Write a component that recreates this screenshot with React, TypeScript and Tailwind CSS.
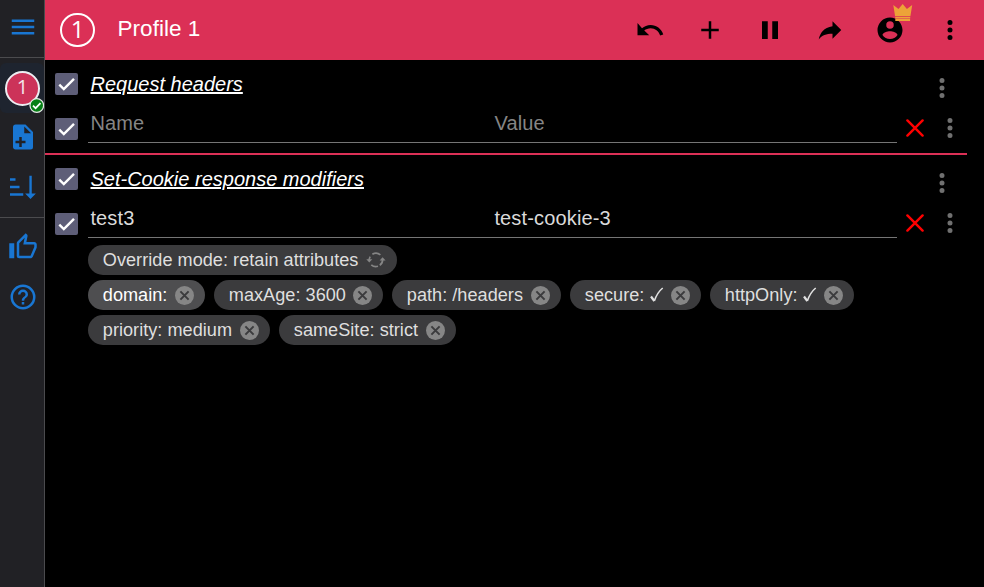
import React from 'react';

const paths = {
  menu: 'M3,6H21V8H3V6M3,11H21V13H3V11M3,16H21V18H3V16Z',
  filePlus:
    'M13,9H18.5L13,3.5V9M6,2H14L20,8V20A2,2 0 0,1 18,22H6C4.89,22 4,21.1 4,20V4C4,2.89 4.89,2 6,2M11,15V12H9V15H6V17H9V20H11V17H14V15H11Z',
  sort: 'M1.6,5H6V6.9H1.6ZM1.6,11H9.2V12.9H1.6ZM1.6,17H12.2V18.9H1.6ZM17.1,3H19V17.2H22.3L18,21.5L13.7,17.2H17.1Z',
  like: 'M5,9V21H1V9H5M9,21A2,2 0 0,1 7,19V9C7,8.45 7.22,7.95 7.59,7.59L14.17,1L15.23,2.06C15.5,2.33 15.67,2.7 15.67,3.11L15.64,3.43L14.69,8H21C22.11,8 23,8.9 23,10V12C23,12.26 22.95,12.5 22.86,12.73L19.84,19.78C19.54,20.5 18.83,21 18,21H9M9,19H18.03L21,12V10H12.21L13.34,4.68L9,9.03V19Z',
  help: 'M11,18H13V16H11V18M12,2A10,10 0 0,0 2,12A10,10 0 0,0 12,22A10,10 0 0,0 22,12A10,10 0 0,0 12,2M12,20C7.59,20 4,16.41 4,12C4,7.59 7.59,4 12,4C16.41,4 20,7.59 20,12C20,16.41 16.41,20 12,20M12,6A4,4 0 0,0 8,10H10A2,2 0 0,1 12,8A2,2 0 0,1 14,10C14,12 11,11.75 11,15H13C13,12.75 16,12.5 16,10A4,4 0 0,0 12,6Z',
  undo: 'M12.5,8C9.85,8 7.45,9 5.6,10.6L2,6.4V16.2H11.4L7.38,12.38C8.77,11.22 10.54,10.5 12.5,10.5C16.04,10.5 19.05,12.81 20.1,16.4L22.6,15.5C21.08,11.03 17.15,8 12.5,8Z',
  plus: 'M19,13H13V19H11V13H5V11H11V5H13V11H19V13Z',
  pause: 'M13.8,19.2H18.4V5H13.8M5.6,19.2H10.2V5H5.6V19.2Z',
  share: 'M21,12L14,5V9C7,10 4,14.6 3,19.5C5.5,16.2 9,14.9 14,14.9V19Z',
  account:
    'M12,19.2C9.5,19.2 7.29,17.92 6,16C6.03,14 10,12.9 12,12.9C14,12.9 17.97,14 18,16C16.71,17.92 14.5,19.2 12,19.2M12,5A3,3 0 0,1 15,8A3,3 0 0,1 12,11A3,3 0 0,1 9,8A3,3 0 0,1 12,5M12,2A10,10 0 0,0 2,12A10,10 0 0,0 12,22A10,10 0 0,0 22,12C22,6.47 17.5,2 12,2Z',
  dots: 'M12,16A2,2 0 0,1 14,18A2,2 0 0,1 12,20A2,2 0 0,1 10,18A2,2 0 0,1 12,16M12,10A2,2 0 0,1 14,12A2,2 0 0,1 12,14A2,2 0 0,1 10,12A2,2 0 0,1 12,10M12,4A2,2 0 0,1 14,6A2,2 0 0,1 12,8A2,2 0 0,1 10,6A2,2 0 0,1 12,4Z',
};

function Icon({ name, className = '' }: { name: keyof typeof paths; className?: string }) {
  return (
    <svg viewBox="0 0 24 24" className={`size-[30px] shrink-0 fill-current ${className}`}>
      <path d={paths[name]} />
    </svg>
  );
}

function Check() {
  return (
    <span className="flex h-[22px] w-[23px] shrink-0 items-center justify-center rounded-[2px] bg-[#5e5e78]">
      <svg viewBox="0 0 23 22" className="h-[22px] w-[23px] fill-none stroke-white stroke-[2.4]">
        <path d="M4.3 11.6L8.8 16L19 5.8" />
      </svg>
    </span>
  );
}

function Sidebar() {
  return (
    <nav className="flex w-[45px] shrink-0 flex-col border-r border-[#4b4b4e] bg-[#212125] text-[#1976d2]">
      <div className="flex h-[58px] items-start justify-center border-b border-[#4b4b4e] pt-3">
        <Icon name="menu" className="ml-[2px]" />
      </div>
      <div className="relative mt-[5px] flex h-[50px] items-center rounded-md bg-[#1e242f] pl-[5px]">
        <span className="flex size-[35px] shrink-0 items-center justify-center rounded-full border-2 border-[#ededf2] bg-[#cc3359] pb-[2px] font-['Open_Sans',sans-serif] text-[20px] leading-none font-medium text-[#f2e6ea]">
          1
        </span>
        <svg viewBox="0 0 15 15" className="absolute right-0 bottom-0 size-[15px]">
          <circle cx="7.8" cy="7.5" r="6.8" fill="#088017" stroke="#e6ebe6" strokeWidth="1.2" />
          <path d="M4 7.7L6.6 10.2L11.5 5.2" fill="none" stroke="white" strokeWidth="1.7" />
        </svg>
      </div>
      <div className="flex h-[105px] flex-col items-center gap-5 border-b border-[#4b4b4e] pt-[9px] pl-[2px]">
        <Icon name="filePlus" />
        <Icon name="sort" />
      </div>
      <div className="flex flex-col items-center gap-5 pt-[14px] pl-[2px]">
        <Icon name="like" />
        <Icon name="help" />
      </div>
    </nav>
  );
}

function Header() {
  return (
    <header className="flex h-[60px] items-center bg-[#db3056] pr-[19px] pl-[15px]">
      <span className="flex h-[34px] w-[35px] items-center justify-center rounded-full border-2 border-white pb-[2px] font-['Open_Sans',sans-serif] text-[24px] leading-none font-medium text-white">
        1
      </span>
      <h1 className="ml-[22.5px] pb-[2px] text-[22.5px] leading-[28px] tracking-[0.04px] text-white">Profile 1</h1>
      <div className="ml-auto flex gap-[30px] text-black">
        <Icon name="undo" />
        <Icon name="plus" />
        <Icon name="pause" />
        <Icon name="share" />
        <span className="relative">
          <Icon name="account" />
          <svg viewBox="0 0 20 18" className="absolute -top-[11px] left-[18px] h-[18px] w-5 fill-[#eda338]">
            <path d="M0.3 1L5.5 5L9.7 0L13.9 5L19.2 1L17.4 12.2H2.1ZM2.2 12.9H17.2V14.2H2.2ZM2.3 14.8H17.1V17H2.3Z" />
          </svg>
        </span>
        <Icon name="dots" />
      </div>
    </header>
  );
}

function SectionTitle({ children }: { children: React.ReactNode }) {
  return (
    <div className="flex h-[45px] items-start pr-[27px] pl-[10px]">
      <div className="pt-[13px]">
        <Check />
      </div>
      <h2 className="ml-[12.5px] pt-3 text-[20px] leading-6 text-white italic underline decoration-2 underline-offset-1">
        {children}
      </h2>
      <Icon name="dots" className="mt-[13px] ml-auto text-[#707070]" />
    </div>
  );
}

function EntryRow({ name, value, color }: { name: string; value: string; color: string }) {
  return (
    <div className={`flex h-[38px] items-start pr-[19px] pl-[10px] ${color}`}>
      <div className="pt-[13px]">
        <Check />
      </div>
      <div className="ml-[10px] h-[38px] w-[404px] border-b border-[#757575] pt-[6px] pl-[2.4px] text-[20px] leading-6 tracking-[0.15px]">
        {name}
      </div>
      <div className="h-[38px] w-[405px] border-b border-[#757575] pt-[6px] pl-[2.4px] text-[20px] leading-6 tracking-[0.15px]">
        {value}
      </div>
      <svg viewBox="0 0 18 18" className="mt-[14px] ml-[9px] size-[18px] shrink-0 fill-none stroke-[#ff0000] stroke-[2.4]">
        <path d="M1.4 1.4L16.6 16.6M16.6 1.4L1.4 16.6" strokeLinecap="round" />
      </svg>
      <Icon name="dots" className="mt-2 ml-auto text-[#707070]" />
    </div>
  );
}

function RemoveIcon() {
  return (
    <svg viewBox="0 0 19 19" className="size-[19px] shrink-0">
      <circle cx="9.5" cy="9.5" r="9.5" fill="#868686" />
      <path d="M5.4 5.4L13.6 13.6M13.6 5.4L5.4 13.6" stroke="#3b3b3d" strokeWidth="2" />
    </svg>
  );
}

function SyncIcon() {
  return (
    <svg viewBox="0 0 20 18" className="h-[18px] w-5 shrink-0 fill-none stroke-[#858585] stroke-[1.7]">
      <path d="M6.4 3.2A6.8 6.8 0 0 1 14.4 3.9M3.2 9.5A6.6 6.6 0 0 1 4.2 5.6M16.6 8.5A6.6 6.6 0 0 1 13.8 14.2M12 15.3A6.8 6.8 0 0 1 5.3 13.9" />
      <path d="M0.3 8.2H6.3L3.3 11.4ZM13.6 9.4H19.6L16.6 6.2Z" className="fill-[#858585] stroke-none" />
    </svg>
  );
}

function Tick() {
  return (
    <svg viewBox="0 0 14 16" className="ml-[5.5px] h-4 w-[14px] shrink-0 fill-none stroke-[#e0e0e0]">
      <path d="M1 9.5L4.3 14" strokeWidth="2.2" />
      <path d="M4.3 14C6 9 8.7 4.3 12.7 1" strokeWidth="1.6" />
    </svg>
  );
}

function Chip({ label, width, tick, active }: { label: string; width: string; tick?: boolean; active?: boolean }) {
  return (
    <span
      className={`flex h-[30px] shrink-0 items-center rounded-full pr-[11.5px] pl-[14.8px] text-[18.125px] leading-[30px] tracking-[0.03px] whitespace-nowrap ${width} ${
        active ? 'bg-[#4e4e50] text-white' : 'bg-[#3b3b3d] text-[#dfdfdf]'
      }`}
    >
      {label}
      {tick && <Tick />}
      <span className="ml-auto">
        <RemoveIcon />
      </span>
    </span>
  );
}

export default function App() {
  return (
    <div className="flex h-[587px] w-[984px] overflow-hidden bg-black font-['Liberation_Sans',Arial,sans-serif]">
      <Sidebar />
      <main className="flex min-w-0 flex-1 flex-col">
        <Header />
        <section className="mr-[17px] h-[95px] border-b-2 border-[#db3056]">
          <div className="w-[939px]">
            <SectionTitle>Request headers</SectionTitle>
            <EntryRow name="Name" value="Value" color="text-[#858585]" />
          </div>
        </section>
        <section>
          <SectionTitle>Set-Cookie response modifiers</SectionTitle>
          <EntryRow name="test3" value="test-cookie-3" color="text-[#dadada]" />
          <div className="mt-[7px] ml-[43px] flex flex-col gap-[5px]">
            <span className="flex h-[30px] w-[309px] items-center rounded-full bg-[#3b3b3d] pr-[11px] pl-[14.8px] text-[18.125px] leading-[30px] tracking-[0.03px] whitespace-nowrap text-[#dfdfdf]">
              Override mode: retain attributes
              <span className="ml-auto">
                <SyncIcon />
              </span>
            </span>
            <div className="flex gap-[9px]">
              <Chip label="domain:" width="w-[117px]" active />
              <Chip label="maxAge: 3600" width="w-[169px]" />
              <Chip label="path: /headers" width="w-[169px]" />
              <Chip label="secure:" width="w-[131px]" tick />
              <Chip label="httpOnly:" width="w-[144px]" tick />
            </div>
            <div className="flex gap-[9px]">
              <Chip label="priority: medium" width="w-[182px]" />
              <Chip label="sameSite: strict" width="w-[177px]" />
            </div>
          </div>
        </section>
      </main>
    </div>
  );
}
